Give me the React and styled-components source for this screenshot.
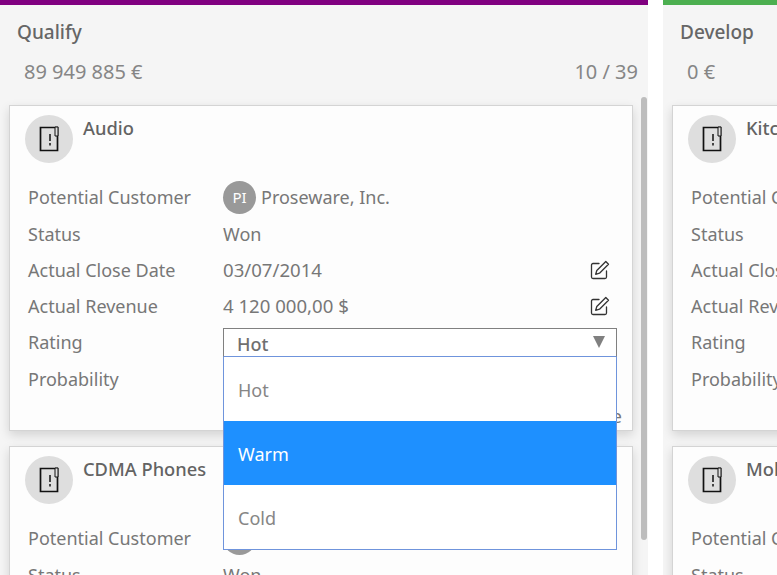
import React from 'react'
import styled, { createGlobalStyle } from 'styled-components'

const GlobalStyle = createGlobalStyle`
  html, body {
    margin: 0;
    height: 100%;
    overflow: hidden;
    background: #fff;
    font-family: "Noto Sans", "Open Sans", sans-serif;
  }
`
const Board = styled.div`
  display: flex;
  gap: 15px;
  width: 777px;
  height: 575px;
  overflow: hidden;
`
const Column = styled.section`
  flex: 0 0 648px;
  height: 575px;
  box-sizing: border-box;
  border-top: 5px solid ${p => p.$accent};
  background: #f5f5f5;
  overflow: hidden;
  position: relative;
`
const StageName = styled.h2`
  margin: 0;
  padding: 12px 0 0 17px;
  font-size: 19px;
  line-height: 30px;
  font-weight: 500;
  color: #666;
`
const StageStats = styled.div`
  display: flex;
  justify-content: space-between;
  padding: 10px 10px 0 24px;
  font-size: 20px;
  line-height: 30px;
  color: #868686;
`
const CardList = styled.div`
  display: flex;
  flex-direction: column;
  gap: 15px;
  padding: 18px 15px 0 9px;
`
const Card = styled.article`
  position: relative;
  box-sizing: border-box;
  height: 326px;
  flex: none;
  background: #fdfdfd;
  border: 1px solid #d4d4d4;
  box-shadow: 0 4px 10px rgba(0, 0, 0, 0.14);
  padding: 9px 15px 0 15px;
`
const CardHead = styled.header`
  display: flex;
  gap: 10px;
  height: 63px;
`
const IconCircle = styled.div`
  width: 48px;
  height: 48px;
  border-radius: 50%;
  background: #dedede;
  display: flex;
  align-items: center;
  justify-content: center;
  flex: none;
`
const CardTitle = styled.h3`
  margin: 0;
  font-size: 18.3px;
  line-height: 26px;
  font-weight: 500;
  color: #636363;
  white-space: nowrap;
`
const Rows = styled.div`
  display: flex;
  flex-direction: column;
  padding-left: 3px;
`
const Row = styled.div`
  display: flex;
  align-items: center;
  height: ${p => p.$height || 36}px;
  font-size: 18px;
  color: #777;
  white-space: nowrap;
`
const Label = styled.div`
  flex: 0 0 195px;
`
const Value = styled.div`
  display: flex;
  align-items: center;
  flex: 1;
  min-width: 0;
  gap: 5px;
  position: relative;
`
const Figure = styled.span`
  font-size: 18.6px;
  margin-top: -2px;
`
const Avatar = styled.span`
  width: 33px;
  height: 33px;
  border-radius: 50%;
  background: #999;
  color: #fff;
  font-size: 15px;
  display: flex;
  align-items: center;
  justify-content: center;
  flex: none;
`
const EditButton = styled.span`
  display: flex;
  margin-left: auto;
  margin-right: 7px;
`
const Select = styled.div`
  display: flex;
  align-items: center;
  justify-content: space-between;
  box-sizing: border-box;
  flex: 1;
  height: 29px;
  border: 1px solid #808080;
  border-bottom-color: #6f94dc;
  padding: 3px 11px 0 13px;
  font-weight: 500;
  background: #fff;
  color: #6f6f6f;
`
const Caret = styled.span`
  width: 0;
  height: 0;
  margin-top: -3px;
  border-left: 6px solid transparent;
  border-right: 6px solid transparent;
  border-top: 12px solid #808080;
`
const Menu = styled.ul`
  position: absolute;
  z-index: 5;
  top: 100%;
  left: 0;
  right: 0;
  box-sizing: border-box;
  margin: 0;
  padding: 0;
  list-style: none;
  background: #fff;
  border: 1px solid #6f94dc;
  border-top: 0;
  height: 193px;
`
const MenuItem = styled.li`
  box-sizing: border-box;
  height: 64px;
  display: flex;
  align-items: center;
  padding: 2px 0 0 14px;
  font-size: 18px;
  color: ${p => (p.$active ? '#fff' : '#868686')};
  background: ${p => (p.$active ? '#1e90ff' : 'transparent')};
`
const FooterLink = styled.div`
  position: absolute;
  right: 10px;
  bottom: 2px;
  font-size: 18px;
  color: #777;
`
const Scrollbar = styled.div`
  position: absolute;
  top: 92px;
  right: 1px;
  width: 6px;
  height: 443px;
  border-radius: 3px;
  background: #bdbdbd;
`

const DocIcon = () => (
  <svg width="20" height="26" viewBox="0 0 20 26" fill="none" stroke="#111" strokeWidth="1.7">
    <path d="M1.500 1.500h17v23h-17z" />
    <path d="M16 1h3v9h-3z" fill="#dedede" strokeWidth="1" />
    <path d="M11 8v7M11 17v2.500" strokeWidth="1.500" />
  </svg>
)

const EditIcon = () => (
  <svg width="20" height="20" viewBox="0 0 20 20" fill="none" stroke="#333" strokeWidth="1.3" strokeLinejoin="round">
    <path d="M9 3.500H3a1.500 1.500 0 0 0-1.500 1.500v12A1.500 1.500 0 0 0 3 18.500h12a1.500 1.500 0 0 0 1.500-1.500V11" strokeLinecap="round" />
    <path d="M15.800 1.500l2.700 2.700-9 9-3.800 1.100 1.100-3.800z" />
  </svg>
)

const Opportunity = ({ title, customer, initials, close, revenue, open }) => (
  <Card>
    <CardHead>
      <IconCircle><DocIcon /></IconCircle>
      <CardTitle>{title}</CardTitle>
    </CardHead>
    <Rows>
      <Row $height={38}>
        <Label>Potential Customer</Label>
        <Value><Avatar>{initials}</Avatar>{customer}</Value>
      </Row>
      <Row>
        <Label>Status</Label>
        <Value>Won</Value>
      </Row>
      <Row>
        <Label>Actual Close Date</Label>
        <Value><Figure>{close}</Figure><EditButton><EditIcon /></EditButton></Value>
      </Row>
      <Row>
        <Label>Actual Revenue</Label>
        <Value><Figure>{revenue}</Figure><EditButton><EditIcon /></EditButton></Value>
      </Row>
      <Row>
        <Label>Rating</Label>
        <Value>
          {open ? (
            <>
              <Select>Hot<Caret /></Select>
              <Menu>
                <MenuItem>Hot</MenuItem>
                <MenuItem $active>Warm</MenuItem>
                <MenuItem>Cold</MenuItem>
              </Menu>
            </>
          ) : 'Hot'}
        </Value>
      </Row>
      <Row $height={37}>
        <Label>Probability</Label>
        <Value />
      </Row>
    </Rows>
    <FooterLink>Close</FooterLink>
  </Card>
)

const App = () => (
  <>
    <GlobalStyle />
    <Board>
      <Column $accent="#800080">
        <StageName>Qualify</StageName>
        <StageStats><span>89 949 885 €</span><span>10 / 39</span></StageStats>
        <CardList>
          <Opportunity title="Audio" customer="Proseware, Inc." initials="PI" close="03/07/2014" revenue="4 120 000,00 $" open />
          <Opportunity title="CDMA Phones" customer="Consulting" initials="C" close="03/07/2014" revenue="4 120 000,00 $" />
        </CardList>
        <Scrollbar />
      </Column>
      <Column $accent="#4caf50">
        <StageName>Develop</StageName>
        <StageStats><span>0 €</span></StageStats>
        <CardList>
          <Opportunity title="Kitchen Appliances" customer="Proseware, Inc." initials="PI" close="03/07/2014" revenue="4 120 000,00 $" />
          <Opportunity title="Mobile Phones" customer="Proseware, Inc." initials="PI" close="03/07/2014" revenue="4 120 000,00 $" />
        </CardList>
      </Column>
    </Board>
  </>
)

export default App
